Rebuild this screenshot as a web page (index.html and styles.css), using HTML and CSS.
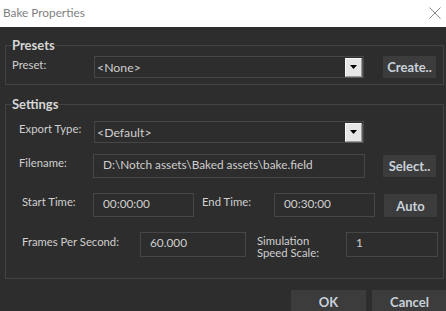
FILE: index.html
```html
<!DOCTYPE html>
<html>
<head>
<meta charset="utf-8">
<link rel="stylesheet" href="styles.css">
</head>
<body>
<div class="window">
  <div class="titlebar">
    <span class="title">Bake Properties</span>
    <svg class="close" width="12" height="12" viewBox="0 0 12 12"><path d="M0.5 0.5 L11.5 11.5 M11.5 0.5 L0.5 11.5" stroke="#8a8a8a" stroke-width="1"/></svg>
  </div>
  <div class="body">
    <fieldset class="group presets">
      <legend>Presets</legend>
      <div class="row row-preset">
        <span class="label">Preset:</span>
        <div class="combo"><span class="combo-text">&lt;None&gt;</span><span class="drop"><svg width="7" height="4" viewBox="0 0 7 4"><path d="M0 0 H7 L3.5 4 Z" fill="#000"/></svg></span></div>
        <button class="btn">Create..</button>
      </div>
    </fieldset>
    <fieldset class="group settings">
      <legend>Settings</legend>
      <div class="row row-export">
        <span class="label">Export Type:</span>
        <div class="combo"><span class="combo-text">&lt;Default&gt;</span><span class="drop"><svg width="7" height="4" viewBox="0 0 7 4"><path d="M0 0 H7 L3.5 4 Z" fill="#000"/></svg></span></div>
      </div>
      <div class="row row-file">
        <span class="label">Filename:</span>
        <div class="field file">D:\Notch assets\Baked assets\bake.field</div>
        <button class="btn">Select..</button>
      </div>
      <div class="row row-time">
        <span class="label">Start Time:</span>
        <div class="field time">00:00:00</div>
        <span class="label end">End Time:</span>
        <div class="field time">00:30:00</div>
        <button class="btn">Auto</button>
      </div>
      <div class="row row-fps">
        <span class="label">Frames Per Second:</span>
        <div class="field fps">60.000</div>
        <span class="label sim"><span class="line">Simulation</span><span class="line">Speed Scale:</span></span>
        <div class="field scale">1</div>
      </div>
    </fieldset>
    <div class="actions">
      <button class="btn big">OK</button>
      <button class="btn big">Cancel</button>
    </div>
  </div>
</div>
</body>
</html>
```
FILE: styles.css
```css
* { box-sizing: border-box; }
html, body { margin: 0; padding: 0; }
body {
  width: 446px;
  height: 311px;
  overflow: hidden;
  background: #2d2d2d;
  font-family: "Lato", "Open Sans", sans-serif;
  font-size: 11.3px;
  color: #cfcfcf;
}
.window { width: 446px; height: 311px; display: flex; flex-direction: column; }
.titlebar {
  height: 27px;
  background: #ffffff;
  display: flex;
  align-items: center;
  justify-content: space-between;
  padding: 0 4px 2px 3px;
  flex: none;
}
.title { color: #808080; font-size: 11.8px; }
.close { margin-right: 1px; margin-top: 1px; }
.body {
  flex: 1;
  background: #2d2d2d;
  padding: 10px 2px 0 5px;
  display: flex;
  flex-direction: column;
}
.group {
  margin: 0;
  border: 1px solid #434343;
  min-width: 0;
  padding-left: 0;
  padding-right: 0;
}
.group legend {
  font-weight: 700;
  font-size: 13px;
  line-height: 16px;
  color: #d6d6d6;
  padding: 0;
  margin-left: 6px;
}
.presets { padding-top: 3px; padding-bottom: 5px; height: 48px; }
.settings { margin-top: 11px; padding-top: 9px; padding-bottom: 0; height: 183px; }
.row { display: flex; align-items: flex-start; }
.label { color: #cfcfcf; white-space: nowrap; }
.row-preset { padding-left: 6px; }
.row-preset .label { width: 82px; padding-top: 2px; }
.combo {
  width: 270px;
  height: 22px;
  border: 1px solid #464646;
  background: #2d2d2d;
  display: flex;
  align-items: center;
  justify-content: space-between;
  padding: 0 1px 0 2px;
  font-size: 12.3px;
}
.combo-text { padding-top: 1px; }
.drop {
  width: 17px;
  height: 19px;
  background: #e6e6e6;
  border-top: 1px solid #f8f8f8;
  border-left: 1px solid #f8f8f8;
  border-right: 1px solid #9a9a9a;
  border-bottom: 1px solid #9a9a9a;
  box-shadow: 1px 1px 0 #5a5a5a;
  display: flex;
  align-items: center;
  justify-content: center;
}
.btn {
  font-family: inherit;
  font-weight: 700;
  font-size: 13px;
  color: #c9d2db;
  background: #3c3c3c;
  border: none;
  width: 53px;
  height: 22px;
  padding: 0;
  margin-left: 19px;
}
.row-export { padding-left: 13px; }
.row-export .label { width: 75px; padding-top: 1px; }
.field {
  border: 1px solid #464646;
  height: 24px;
  padding: 2px 0 0 9px;
  font-size: 11.8px;
  color: #cfcfcf;
  white-space: nowrap;
}
.row-file { margin-top: 11px; padding-left: 13px; }
.row-file .label { width: 74px; padding-top: 2px; }
.file { width: 272px; }
.row-file .btn { margin-left: 18px; margin-top: 1px; }
.row-time { margin-top: 15px; padding-left: 16px; }
.row-time .label { width: 71px; padding-top: 2px; }
.time { width: 101px; }
.row-time .label.end { width: 72px; margin-left: 8px; }
.row-time .btn { margin-left: 9px; margin-top: 1px; height: 23px; }
.row-fps { margin-top: 15px; padding-left: 16px; }
.row-fps .label { width: 118px; padding-top: 3px; }
.fps { width: 106px; height: 25px; }
.row-fps .label.sim { width: 89px; margin-left: 11px; padding-top: 3px; display: flex; flex-direction: column; }
.sim .line { line-height: 12px; height: 12px; }
.scale { width: 92px; height: 25px; }
.actions {
  display: flex;
  justify-content: flex-end;
  gap: 6px;
  margin-top: 11px;
  margin-right: -3px;
}
.btn.big { width: 75px; height: 24px; margin-left: 0; }
```
